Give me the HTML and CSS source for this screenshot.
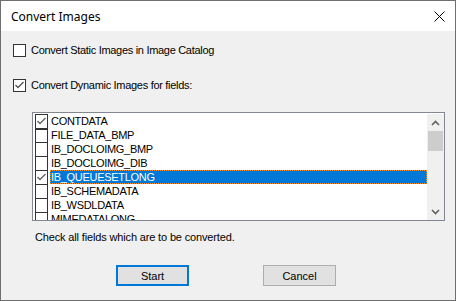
FILE: index.html
```html
<!DOCTYPE html>
<html lang="en">
<head>
  <meta charset="UTF-8">
  <title>Convert Images</title>
  <link rel="stylesheet" href="styles.css">
</head>
<body>

<div class="window">
  <div class="titlebar">
    <span class="title">Convert Images</span>
    <svg class="close" width="11" height="11" viewBox="0 0 11 11">
      <path d="M0.5 0.5 L10.5 10.5 M10.5 0.5 L0.5 10.5" stroke="#000" stroke-width="1" fill="none"/>
    </svg>
  </div>

  <div class="content">
    <label class="option">
      <span class="box"></span>
      Convert Static Images in Image Catalog
    </label>

    <label class="option second">
      <span class="box">
        <svg width="11" height="11" viewBox="0 0 11 11"><path d="M1.5 5 L4 7.5 L9.5 2" stroke="#555" stroke-width="1.4" fill="none"/></svg>
      </span>
      Convert Dynamic Images for fields:
    </label>

    <div class="listbox">
      <div class="items">
        <div class="item"><span class="cb"><svg width="11" height="11" viewBox="0 0 11 11"><path d="M1.5 5 L4 7.5 L9.5 2" stroke="#666" stroke-width="1.4" fill="none"/></svg></span><span class="name">CONTDATA</span></div>
        <div class="item"><span class="cb thick"></span><span class="name">FILE_DATA_BMP</span></div>
        <div class="item"><span class="cb"></span><span class="name">IB_DOCLOIMG_BMP</span></div>
        <div class="item"><span class="cb"></span><span class="name">IB_DOCLOIMG_DIB</span></div>
        <div class="item"><span class="cb"><svg width="11" height="11" viewBox="0 0 11 11"><path d="M1.5 5 L4 7.5 L9.5 2" stroke="#666" stroke-width="1.4" fill="none"/></svg></span><span class="name selected">IB_QUEUESETLONG</span></div>
        <div class="item"><span class="cb"></span><span class="name">IB_SCHEMADATA</span></div>
        <div class="item"><span class="cb"></span><span class="name">IB_WSDLDATA</span></div>
        <div class="item"><span class="cb"></span><span class="name">MIMEDATALONG</span></div>
      </div>
      <div class="scrollbar">
        <div class="arrow">
          <svg width="9" height="6" viewBox="0 0 9 6"><path d="M1 5 L4.5 1.5 L8 5" stroke="#606060" stroke-width="1.6" fill="none"/></svg>
        </div>
        <div class="thumb"></div>
        <div class="track"></div>
        <div class="arrow">
          <svg width="9" height="6" viewBox="0 0 9 6"><path d="M1 1 L4.5 4.5 L8 1" stroke="#606060" stroke-width="1.6" fill="none"/></svg>
        </div>
      </div>
    </div>

    <p class="hint">Check all fields which are to be converted.</p>

    <div class="buttons">
      <button type="button" class="default">Start</button>
      <button type="button">Cancel</button>
    </div>
  </div>
</div>

</body>
</html>
```

FILE: styles.css
```css
body {
  margin: 0;
  font-family: "Liberation Sans", Arial, sans-serif;
  font-size: 11px;
  letter-spacing: -0.3px;
  color: #000;
}
.window {
  width: 456px;
  height: 301px;
  box-sizing: border-box;
  border: 1px solid #6f6f6f;
  background: #f0f0f0;
  display: flex;
  flex-direction: column;
}
.titlebar {
  height: 30px;
  background: #fff;
  display: flex;
  align-items: center;
  justify-content: space-between;
  padding: 0 10px 0 10px;
}
.title {
  font-family: "Noto Sans", sans-serif;
  font-size: 12px;
  letter-spacing: 0;
  margin-top: 1px;
}
.close {
  margin-top: 1px;
}
.content {
  padding: 13px 10px 0 12px;
}
.option {
  display: flex;
  align-items: center;
  height: 13px;
  line-height: 13px;
}
.option.second {
  margin-top: 22px;
}
.box {
  width: 13px;
  height: 13px;
  box-sizing: border-box;
  border: 1px solid #333;
  background: #fff;
  margin-right: 5px;
  display: flex;
  align-items: center;
  justify-content: center;
}
.listbox {
  margin: 20px 0 0 19px;
  width: 413px;
  height: 109px;
  box-sizing: border-box;
  border: 1px solid #828790;
  background: #fff;
  display: flex;
  overflow: hidden;
}
.items {
  flex: 1;
  padding: 1px 0 0 2px;
  overflow: hidden;
}
.item {
  display: flex;
  height: 14px;
  line-height: 14px;
}
.cb {
  width: 13px;
  height: 14px;
  box-sizing: border-box;
  border: 1px solid #333;
  border-bottom: none;
  margin-right: 2px;
  display: flex;
  align-items: center;
  justify-content: center;
}
.cb.thick {
  border-top-width: 2px;
}
.name {
  flex: 1;
  padding-left: 1px;
  white-space: nowrap;
}
.name.selected {
  background: #0078d7;
  color: #fff;
  outline: 1px dotted #f0932f;
  outline-offset: -1px;
}
.scrollbar {
  width: 17px;
  margin-top: 1px;
  background: #f0f0f0;
  display: flex;
  flex-direction: column;
}
.arrow {
  height: 17px;
  display: flex;
  align-items: center;
  justify-content: center;
}
.thumb {
  height: 20px;
  margin: 0 1px;
  background: #cdcdcd;
}
.track {
  flex: 1;
}
.hint {
  margin: 10px 0 0 22px;
  line-height: 13px;
  letter-spacing: -0.15px;
}
.buttons {
  display: flex;
  gap: 74px;
  margin: 21px 0 0 103px;
}
button {
  width: 73px;
  height: 21px;
  font-family: "Liberation Sans", Arial, sans-serif;
  font-size: 11px;
  background: #e1e1e1;
  border: 1px solid #adadad;
  padding: 0;
  color: #000;
}
button.default {
  border: 2px solid #0078d7;
}
```
